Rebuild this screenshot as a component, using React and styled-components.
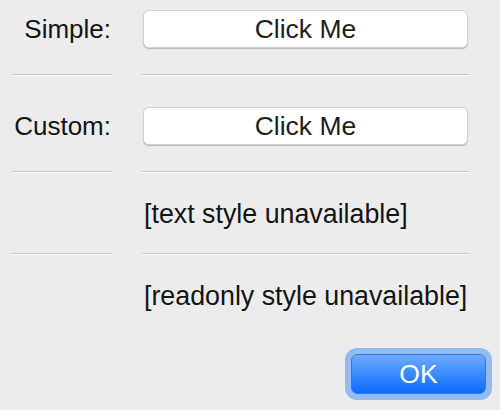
import styled, { createGlobalStyle } from "styled-components";

const GlobalStyle = createGlobalStyle`
    html, body {
        margin: 0;
        padding: 0;
        background: #ececec;
    }

    body {
        font-family: "Liberation Sans", Arial, sans-serif;
        font-size: 26px;
        color: #141414;
    }
`;

const Dialog = styled.div`
    width: 500px;
    height: 410px;
    box-sizing: border-box;
    display: flex;
    flex-direction: column;
`;

const Row = styled.div`
    display: grid;
    grid-template-columns: 101px 327px;
    column-gap: 29px;
    align-items: center;
    padding: ${props => props.$top}px 0 ${props => props.$bottom}px 12px;
`;

const Label = styled.span`
    text-align: right;
    padding-right: 2px;
    line-height: 30px;
    white-space: nowrap;
`;

const PushButton = styled.button`
    margin: 0 1px;
    height: 38px;
    box-sizing: border-box;
    background: #ffffff;
    border: 1px solid #d2d2d2;
    border-radius: 6px;
    box-shadow: 0 1px 1px rgba(0, 0, 0, 0.22);
    font-family: inherit;
    font-size: 26.5px;
    color: #1e1e1e;
    padding: 0;
    line-height: 36px;
    cursor: pointer;
`;

const Note = styled.span`
    padding-left: 2px;
    font-size: 26.8px;
    line-height: 30px;
    white-space: nowrap;
`;

const Separator = styled.div`
    display: grid;
    grid-template-columns: 101px 327px;
    column-gap: 29px;
    padding-left: 12px;
`;

const Line = styled.div`
    height: 1px;
    background: #c7c7c7;
    border-bottom: 1px solid #fbfbfb;
`;

const Footer = styled.div`
    display: flex;
    justify-content: flex-end;
    padding: 43px 14px 0 0;
`;

const DefaultButton = styled.button`
    width: 135px;
    height: 40px;
    box-sizing: border-box;
    border: 1px solid #2a7cf6;
    border-radius: 6px;
    background: linear-gradient(to bottom, #6eabfd 0%, #3a8bfd 50%, #0d6afd 100%);
    box-shadow: 0 0 0 6px #93bbf0;
    color: #ffffff;
    font-family: inherit;
    font-size: 26.5px;
    line-height: 38px;
    padding: 0;
    cursor: pointer;
`;

export default function App() {
    return (
        <>
            <GlobalStyle />
            <Dialog>
                <Row $top={10} $bottom={26}>
                    <Label>Simple:</Label>
                    <PushButton>Click Me</PushButton>
                </Row>
                <Separator>
                    <Line />
                    <Line />
                </Separator>
                <Row $top={31} $bottom={26}>
                    <Label>Custom:</Label>
                    <PushButton>Click Me</PushButton>
                </Row>
                <Separator>
                    <Line />
                    <Line />
                </Separator>
                <Row $top={26} $bottom={24}>
                    <Label />
                    <Note>[text style unavailable]</Note>
                </Row>
                <Separator>
                    <Line />
                    <Line />
                </Separator>
                <Row $top={26} $bottom={0}>
                    <Label />
                    <Note>[readonly style unavailable]</Note>
                </Row>
                <Footer>
                    <DefaultButton>OK</DefaultButton>
                </Footer>
            </Dialog>
        </>
    );
}
